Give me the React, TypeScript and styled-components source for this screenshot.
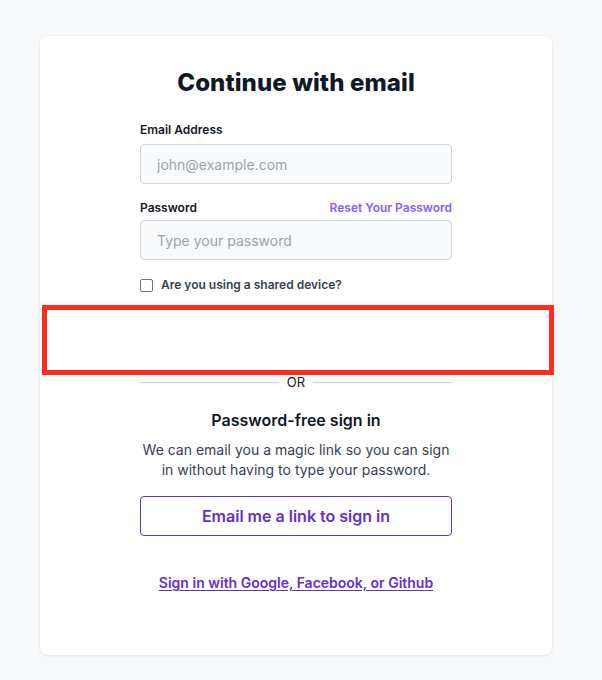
import React from "react";
import styled, { createGlobalStyle } from "styled-components";

const Global = createGlobalStyle`
  html, body { margin: 0; padding: 0; background: #f8f9fb; }
  body { font-family: Inter, "Noto Sans", sans-serif; color: #111827; }
  * { box-sizing: border-box; }
`;

const Page = styled.div`
  padding: 36px 50px 25px 40px;
  min-height: 680px;
`;

const Card = styled.div`
  width: 512px;
  height: 619px;
  background: #ffffff;
  border-radius: 8px;
  box-shadow: 0 1px 3px rgba(17, 24, 39, 0.08), 0 0 0 1px rgba(17, 24, 39, 0.02);
  padding-top: 31px;
  display: flex;
  flex-direction: column;
  align-items: center;
`;

const Title = styled.h1`
  margin: 0;
  font-size: 24px;
  line-height: 32px;
  font-weight: 800;
  color: #111827;
  letter-spacing: 0.1px;
`;

const Form = styled.div`
  width: 312px;
  display: flex;
  flex-direction: column;
`;

const LabelRow = styled.div<{ $top: number; $bottom: number }>`
  display: flex;
  justify-content: space-between;
  align-items: center;
  margin-top: ${(p) => p.$top}px;
  margin-bottom: ${(p) => p.$bottom}px;
`;

const Label = styled.label`
  font-size: 12px;
  line-height: 16px;
  font-weight: 600;
  color: #111827;
`;

const ResetLink = styled.a`
  font-size: 12px;
  line-height: 16px;
  font-weight: 600;
  color: #8b5cf6;
  text-decoration: none;
`;

const Input = styled.input`
  width: 100%;
  height: 40px;
  border: 1px solid #d1d5db;
  border-radius: 4px;
  background: #f9fafb;
  padding: 0 16px;
  font-family: Inter, "Noto Sans", sans-serif;
  font-size: 14px;
  color: #111827;
  outline: none;
  &::placeholder { color: #9ca3af; }
`;

const CheckRow = styled.label`
  display: flex;
  align-items: center;
  gap: 8px;
  margin-top: 17px;
  font-size: 12px;
  line-height: 16px;
  font-weight: 600;
  color: #374151;
`;

const CheckBox = styled.span`
  width: 13px;
  height: 13px;
  border: 1px solid #767676;
  border-radius: 2px;
  background: #fff;
  flex: none;
`;

const Highlight = styled.div`
  width: 512px;
  height: 70px;
  margin: 12px -2px 0 2px;
  border: 5px solid #ff2d20;
`;

const Divider = styled.div`
  width: 312px;
  display: flex;
  align-items: center;
  gap: 8px;
  margin-top: -1px;
  font-size: 13px;
  line-height: 16px;
  color: #111827;
  &::before, &::after {
    content: "";
    flex: 1;
    height: 1px;
    background: #d1d5db;
  }
`;

const SubTitle = styled.h2`
  margin: 18px 0 0;
  font-size: 16px;
  line-height: 24px;
  font-weight: 600;
  color: #111827;
`;

const Text = styled.p`
  margin: 8px 0 0;
  width: 312px;
  text-align: center;
  font-size: 14px;
  line-height: 20px;
  color: #374151;
`;

const LinkButton = styled.button`
  margin-top: 16px;
  width: 312px;
  height: 40px;
  border: 1px solid #6430cc;
  border-radius: 4px;
  background: #fff;
  font-family: Inter, "Noto Sans", sans-serif;
  font-size: 16px;
  font-weight: 600;
  color: #6430cc;
  cursor: pointer;
`;

const SocialLink = styled.a`
  margin-top: 37px;
  font-size: 14px;
  line-height: 20px;
  font-weight: 600;
  color: #6430cc;
  text-decoration: underline;
  text-underline-offset: 2px;
`;

export default function App() {
  return (
    <>
      <Global />
      <Page>
        <Card>
          <Title>Continue with email</Title>
          <Form>
            <LabelRow $top={23} $bottom={6}>
              <Label>Email Address</Label>
            </LabelRow>
            <Input placeholder="john@example.com" />
            <LabelRow $top={16} $bottom={4}>
              <Label>Password</Label>
              <ResetLink href="#">Reset Your Password</ResetLink>
            </LabelRow>
            <Input type="password" placeholder="Type your password" />
            <CheckRow>
              <CheckBox />
              Are you using a shared device?
            </CheckRow>
          </Form>
          <Highlight />
          <Divider>OR</Divider>
          <SubTitle>Password-free sign in</SubTitle>
          <Text>We can email you a magic link so you can sign in without having to type your password.</Text>
          <LinkButton>Email me a link to sign in</LinkButton>
          <SocialLink href="#">Sign in with Google, Facebook, or Github</SocialLink>
        </Card>
      </Page>
    </>
  );
}
